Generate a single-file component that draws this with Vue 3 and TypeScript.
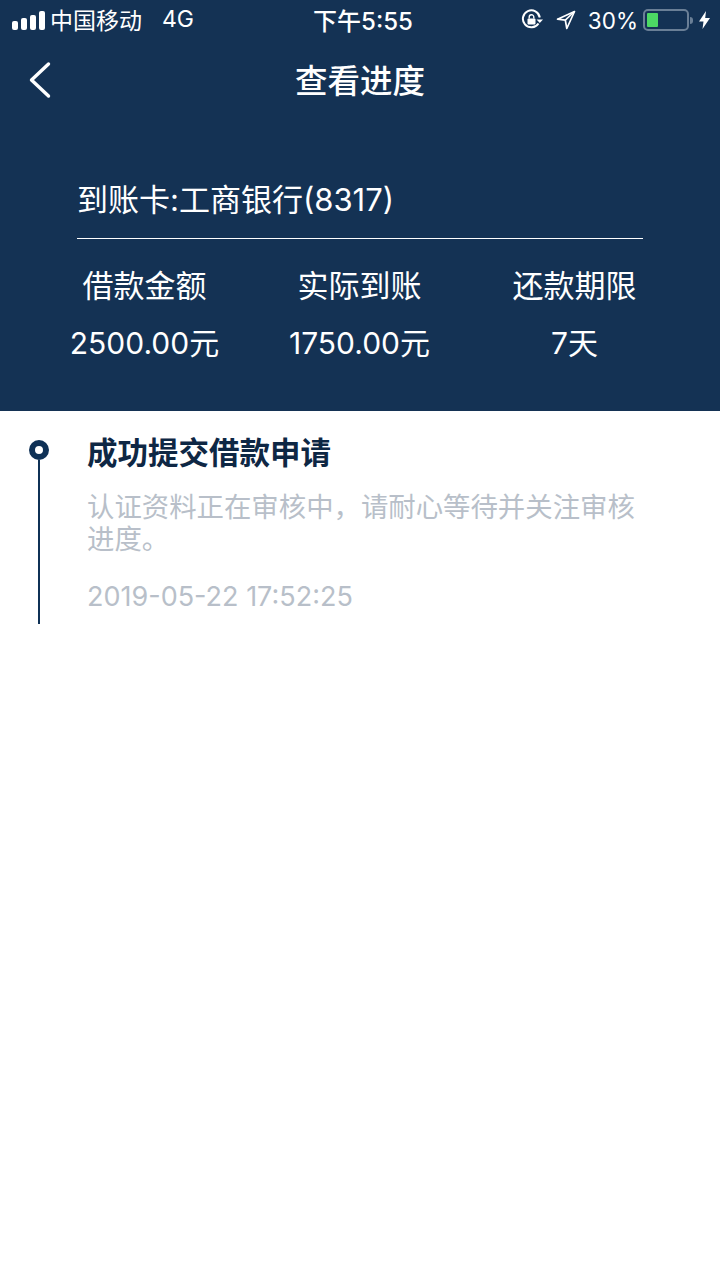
<script setup lang="ts">
const stats = [
  { label: '借款金额', value: '2500.00元' },
  { label: '实际到账', value: '1750.00元' },
  { label: '还款期限', value: '7天' }
]
</script>

<template>
  <div class="page">
    <div class="header">
      <div class="status-bar">
        <div class="status-left">
          <span class="signal">
            <i class="b1"></i><i class="b2"></i><i class="b3"></i><i class="b4"></i>
          </span>
          <span class="carrier">中国移动</span>
          <span class="net">4G</span>
        </div>
        <div class="status-time">下午5:55</div>
        <div class="status-right">
          <svg class="lock" width="22" height="22" viewBox="0 0 22 22" fill="none">
            <path d="M17.5 14.5A8.5 8.5 0 1 1 18.8 8.5" stroke="#fff" stroke-width="2" />
            <path d="M15.5 10.5h6.5l-3.2 3.6z" fill="#fff" />
            <rect x="6.5" y="9.5" width="8" height="6" rx="1" fill="#fff" />
            <path d="M8.2 9.5V8a2.3 2.3 0 0 1 4.6 0v1.500" stroke="#fff" stroke-width="1.400" />
          </svg>
          <svg class="arrow" width="20" height="20" viewBox="0 0 20 20" fill="none">
            <path d="M18.500 1.500 1.500 9.200l7.800.9 1.500 8.400z" stroke="#fff" stroke-width="1.700" stroke-linejoin="round" />
            <path d="M18.500 1.500 9.300 10.100" stroke="#fff" stroke-width="1.500" />
          </svg>
          <span class="percent">30%</span>
          <span class="battery"><i class="level"></i></span>
          <span class="nub"></span>
          <svg class="bolt" width="11" height="18" viewBox="0 0 11 18">
            <path d="M7 0 0 10.500h4.500L3.500 18 11 7H6.200z" fill="#fff" />
          </svg>
        </div>
      </div>

      <div class="nav">
        <svg class="back" width="24" height="38" viewBox="0 0 24 38" fill="none">
          <path d="M20.500 3 3.500 19l17 16" stroke="#fff" stroke-width="3.400" stroke-linecap="round" stroke-linejoin="round" />
        </svg>
        <div class="title">查看进度</div>
      </div>

      <div class="card-line">到账卡:工商银行(8317)</div>

      <div class="stats">
        <div v-for="s in stats" :key="s.label" class="stat">
          <div class="stat-label">{{ s.label }}</div>
          <div class="stat-value">{{ s.value }}</div>
        </div>
      </div>
    </div>

    <div class="timeline">
      <div class="rail">
        <span class="dot"></span>
        <span class="line"></span>
      </div>
      <div class="entry">
        <div class="entry-title">成功提交借款申请</div>
        <div class="entry-desc">认证资料正在审核中，请耐心等待并关注审核进度。</div>
        <div class="entry-time">2019-05-22 17:52:25</div>
      </div>
    </div>
  </div>
</template>

<style>
html,
body {
  margin: 0;
  background: #fff;
}
</style>

<style scoped>
.page {
  width: 720px;
  height: 1280px;
  background: #fff;
  overflow: hidden;
  font-family: "Inter", "Noto Sans CJK SC", sans-serif;
}

.header {
  height: 411px;
  background: #143254;
  color: #fff;
  overflow: hidden;
}

.status-bar {
  height: 40px;
  display: grid;
  grid-template-columns: 1fr auto 1fr;
  align-items: center;
  padding: 0 10px 0 12px;
}

.status-left {
  display: flex;
  align-items: center;
}

.signal {
  display: flex;
  align-items: flex-end;
  gap: 3px;
  margin-right: 5px;
}

.signal i {
  display: block;
  width: 6px;
  border-radius: 2px;
  background: #fff;
}

.b1 { height: 9px; }
.b2 { height: 12px; }
.b3 { height: 15px; }
.b4 { height: 19px; }

.carrier {
  margin-top: -2px;
  font-size: 23px;
}

.net {
  margin-top: -2px;
  font-size: 23px;
  margin-left: 20px;
}

.status-time {
  margin-top: -2px;
  padding-left: 4px;
  font-size: 24px;
  font-weight: 500;
}

.status-right {
  display: flex;
  align-items: center;
  justify-content: flex-end;
}

.lock {
  margin-right: 13px;
}

.arrow {
  margin-right: 12px;
}

.percent {
  font-size: 22.500px;
  margin-right: 5px;
}

.battery {
  display: block;
  box-sizing: border-box;
  width: 46px;
  height: 22px;
  padding: 2px;
  border: 2px solid #6a7f96;
  border-radius: 5px;
}

.level {
  display: block;
  width: 11px;
  height: 14px;
  background: #4cd964;
  border-radius: 1px;
}

.nub {
  width: 3px;
  height: 7px;
  margin-left: 1px;
  margin-right: 6px;
  background: #6a7f96;
  border-radius: 0 3px 3px 0;
}

.nav {
  position: relative;
  height: 80px;
  display: flex;
  align-items: center;
  justify-content: center;
}

.back {
  position: absolute;
  left: 28px;
  top: 21px;
}

.title {
  margin-top: -3px;
  font-size: 32.500px;
  font-weight: 500;
}

.card-line {
  margin: 58px 77px 0;
  padding-bottom: 17px;
  border-bottom: 1px solid #fff;
  font-size: 31px;
  line-height: 43px;
}

.stats {
  display: grid;
  grid-template-columns: 215px 215px 215px;
  margin: 25px 0 0 37px;
}

.stat {
  text-align: center;
}

.stat-label {
  font-size: 31px;
  line-height: 44px;
}

.stat-value {
  margin-top: 13px;
  font-size: 30px;
  line-height: 44px;
}

.timeline {
  display: flex;
  padding: 29px 80px 0 29px;
}

.rail {
  width: 20px;
  display: flex;
  flex-direction: column;
  align-items: center;
}

.dot {
  box-sizing: border-box;
  width: 20px;
  height: 20px;
  border: 6px solid #0f3156;
  border-radius: 50%;
  background: #fff;
}

.line {
  width: 2px;
  height: 164px;
  background: #0f3156;
}

.entry {
  margin-left: 38px;
  flex: 1;
}

.entry-title {
  margin-top: -7px;
  font-size: 30.500px;
  line-height: 40px;
  font-weight: 700;
  color: #0e2744;
}

.entry-desc {
  margin-top: 18px;
  font-size: 27.400px;
  line-height: 32px;
  color: #b8bfc9;
}

.entry-time {
  margin-top: 26px;
  font-size: 27px;
  line-height: 32px;
  color: #b8bfc9;
}
</style>
